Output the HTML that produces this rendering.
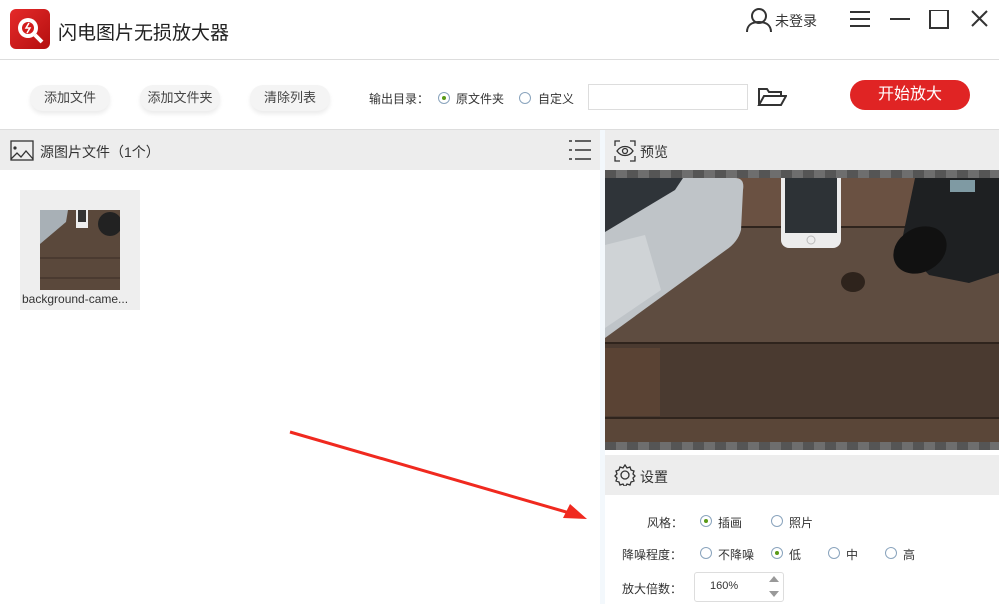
<!DOCTYPE html>
<html><head><meta charset="utf-8"><style>
*{margin:0;padding:0;box-sizing:border-box}
body{width:999px;height:604px;overflow:hidden;background:#fff;font-family:"Liberation Sans","Noto Sans CJK SC",sans-serif;color:#333;position:relative}
.a{position:absolute}
.btn{position:absolute;top:85px;height:26px;background:#f4f4f4;border-radius:13px;box-shadow:0 3px 4px rgba(0,0,0,.08);font-size:13px;text-align:center;line-height:26px;color:#444}
.radio{position:absolute;width:12px;height:12px;border:1px solid #8aa4bd;border-radius:50%;background:#fff}
.radio.on::after{content:"";position:absolute;left:3px;top:3px;width:4px;height:4px;border-radius:50%;background:#5a9a17}
.t13{font-size:13px;position:absolute}
</style></head><body>
<!-- header -->
<div class="a" style="left:10px;top:9px;width:40px;height:40px;border-radius:6px;background:linear-gradient(135deg,#e52a2a,#b40f0f)"></div>
<svg class="a" style="left:10px;top:9px" width="40" height="40"><circle cx="18" cy="19" r="10" fill="#fff"/><circle cx="18" cy="19" r="6" fill="#d31b1b"/><path d="M19 14l-3 5h4l-3 5" stroke="#fff" stroke-width="1.5" fill="none"/><path d="M25 26l7 7" stroke="#fff" stroke-width="4"/></svg>
<div class="a" style="left:58px;top:18px;font-size:19px;color:#222">闪电图片无损放大器</div>
<svg class="a" style="left:745px;top:6px" width="30" height="26"><circle cx="14" cy="10" r="7" stroke="#333" stroke-width="2" fill="none"/><path d="M2 26c0-7 5-10 12-10s12 3 12 10" stroke="#333" stroke-width="2" fill="none"/></svg>
<div class="a" style="left:775px;top:11px;font-size:14px">未登录</div>
<svg class="a" style="left:848px;top:10px" width="140" height="22"><path d="M2 2h20M2 9h20M2 16h20" stroke="#333" stroke-width="2"/><path d="M42 9h20" stroke="#333" stroke-width="2"/><rect x="82" y="0" width="18" height="18" stroke="#333" stroke-width="2" fill="none"/><path d="M124 1l15 15M139 1l-15 15" stroke="#333" stroke-width="2"/></svg>
<div class="a" style="left:0;top:59px;width:999px;height:1px;background:#ddd"></div>
<!-- toolbar -->
<div class="btn" style="left:30px;width:80px">添加文件</div>
<div class="btn" style="left:140px;width:80px">添加文件夹</div>
<div class="btn" style="left:250px;width:80px">清除列表</div>
<div class="t13" style="left:369px;top:90px;font-size:12px">输出目录：</div>
<div class="radio on" style="left:438px;top:92px"></div>
<div class="t13" style="left:456px;top:90px;font-size:12px">原文件夹</div>
<div class="radio" style="left:519px;top:92px"></div>
<div class="t13" style="left:538px;top:90px;font-size:12px">自定义</div>
<div class="a" style="left:588px;top:84px;width:160px;height:26px;border:1px solid #ddd"></div>
<svg class="a" style="left:757px;top:87px" width="30" height="20"><path d="M2 18V2h8l2 3h12v4M2 18l5-9h22l-5 9z" stroke="#333" stroke-width="2" fill="none"/></svg>
<div class="a" style="left:850px;top:80px;width:120px;height:30px;border-radius:15px;background:#e02424;color:#fff;font-size:16px;text-align:center;line-height:30px">开始放大</div>
<div class="a" style="left:0;top:129px;width:999px;height:1px;background:#ddd"></div>
<!-- left panel -->
<div class="a" style="left:0;top:130px;width:600px;height:40px;background:#ededed"></div>
<svg class="a" style="left:10px;top:140px" width="24" height="21"><rect x="1" y="1" width="22" height="19" stroke="#333" stroke-width="1.3" fill="none"/><circle cx="5" cy="8" r="1.6" fill="#333"/><path d="M1 19l6-6 4 4 5-6 7 8" stroke="#333" stroke-width="1.3" fill="none"/></svg>
<div class="a" style="left:40px;top:142px;font-size:14px">源图片文件（1个）</div>
<svg class="a" style="left:569px;top:139px" width="22" height="22"><path d="M0 2h3M6 2h16M0 11h3M6 11h16M0 20h3M6 20h16" stroke="#333" stroke-width="1.5"/></svg>
<div class="a" style="left:20px;top:190px;width:120px;height:120px;background:#eee"></div>
<svg class="a" style="left:40px;top:210px" width="80" height="80"><rect width="80" height="80" fill="#5a483b"/><path d="M0 0h28l-2 12-26 22z" fill="#a8b0b6"/><rect x="36" y="0" width="12" height="18" fill="#eee"/><rect x="38" y="0" width="8" height="12" fill="#333"/><circle cx="70" cy="14" r="12" fill="#222"/><path d="M0 48h80M0 68h80" stroke="#3a2d24"/></svg>
<div class="a" style="left:22px;top:292px;font-size:12px">background-came...</div>
<svg class="a" style="left:285px;top:428px" width="310" height="95"><path d="M5 4L295 88" stroke="#f0291f" stroke-width="3"/><path d="M302 91l-24-1 7-14z" fill="#f0291f"/></svg>
<!-- divider -->
<div class="a" style="left:600px;top:130px;width:5px;height:474px;background:#f3f8fc"></div>
<!-- right panel -->
<div class="a" style="left:605px;top:130px;width:394px;height:40px;background:#ededed"></div>
<svg class="a" style="left:614px;top:140px" width="22" height="22"><path d="M1 6V1h5M16 1h5v5M21 16v5h-5M6 21H1v-5" stroke="#333" stroke-width="1.3" fill="none"/><path d="M3 11c4-6 12-6 16 0-4 6-12 6-16 0z" stroke="#333" stroke-width="1.3" fill="none"/><circle cx="11" cy="11" r="2.5" stroke="#333" stroke-width="1.3" fill="none"/></svg>
<div class="a" style="left:640px;top:142px;font-size:14px">预览</div>
<svg class="a" style="left:605px;top:170px" width="394" height="280">
<defs><pattern id="ck" width="22" height="9" patternUnits="userSpaceOnUse"><rect width="11" height="9" fill="#555"/><rect x="11" width="11" height="9" fill="#6e6e6e"/></pattern></defs>
<rect y="8" width="394" height="50" fill="#6a5142"/>
<rect y="58" width="394" height="115" fill="#5e4c40"/>
<rect y="173" width="394" height="75" fill="#4a3a30"/>
<rect y="248" width="394" height="24" fill="#5a4638"/>
<rect x="0" y="178" width="55" height="68" fill="#5a4334"/>
<path d="M0 57h394M0 173h394M0 248h394" stroke="#2f241d" stroke-width="2"/>
<ellipse cx="248" cy="112" rx="12" ry="10" fill="#2e231c"/>
<path d="M0 8h130q10 0 8 12l-2 40q-3 12-15 20L0 168z" fill="#bfc4c8"/>
<path d="M0 8h78L70 20 0 62z" fill="#2f3439"/>
<path d="M0 75l40-10 16 55-56 38z" fill="#cfd3d6"/>
<rect x="176" y="0" width="60" height="78" rx="8" fill="#ececec"/>
<rect x="180" y="8" width="52" height="55" fill="#2d3236"/>
<circle cx="206" cy="70" r="4" fill="none" stroke="#bbb"/>
<path d="M310 8h84v95l-30 10-40-8-28-30z" fill="#1e2022"/>
<ellipse cx="315" cy="80" rx="28" ry="22" fill="#111" transform="rotate(-30 315 80)"/>
<rect x="345" y="10" width="25" height="12" fill="#7f9aa3"/>
<rect y="0" width="394" height="8" fill="url(#ck)"/>
<rect y="272" width="394" height="8" fill="url(#ck)"/>
</svg>
<div class="a" style="left:605px;top:455px;width:394px;height:40px;background:#ededed"></div>
<svg class="a" style="left:614px;top:464px" width="22" height="22"><path d="M11 1l2 3 3-1 1 3 3 1-1 3 2 2-2 2 1 3-3 1-1 3-3-1-2 3-2-3-3 1-1-3-3-1 1-3-2-2 2-2-1-3 3-1 1-3 3 1z" stroke="#333" stroke-width="1.3" fill="none"/><circle cx="11" cy="11" r="4" stroke="#333" stroke-width="1.3" fill="none"/></svg>
<div class="a" style="left:640px;top:467px;font-size:14px">设置</div>
<div class="t13" style="left:647px;top:514px;font-size:12px">风格：</div>
<div class="radio on" style="left:700px;top:515px"></div>
<div class="t13" style="left:718px;top:514px;font-size:12px">插画</div>
<div class="radio" style="left:771px;top:515px"></div>
<div class="t13" style="left:789px;top:514px;font-size:12px">照片</div>
<div class="t13" style="left:622px;top:546px;font-size:12px">降噪程度：</div>
<div class="radio" style="left:700px;top:547px"></div>
<div class="t13" style="left:718px;top:546px;font-size:12px">不降噪</div>
<div class="radio on" style="left:771px;top:547px"></div>
<div class="t13" style="left:789px;top:546px;font-size:12px">低</div>
<div class="radio" style="left:828px;top:547px"></div>
<div class="t13" style="left:846px;top:546px;font-size:12px">中</div>
<div class="radio" style="left:885px;top:547px"></div>
<div class="t13" style="left:903px;top:546px;font-size:12px">高</div>
<div class="t13" style="left:622px;top:580px;font-size:12px">放大倍数：</div>
<div class="a" style="left:694px;top:572px;width:90px;height:30px;border:1px solid #ddd;border-radius:3px"></div>
<div class="t13" style="left:710px;top:580px;font-size:11px">160%</div>
<svg class="a" style="left:768px;top:575px" width="12" height="24"><path d="M1 7l5-6 5 6zM1 16l5 6 5-6z" fill="#999"/></svg>
</body></html>
